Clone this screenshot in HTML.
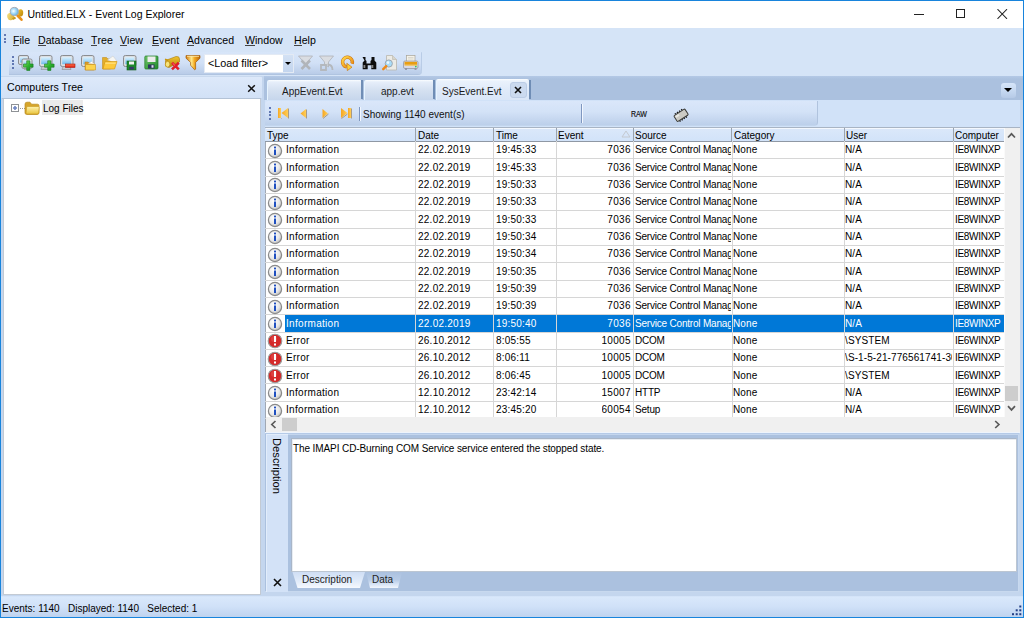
<!DOCTYPE html>
<html><head><meta charset="utf-8">
<style>
*{margin:0;padding:0;box-sizing:border-box}
html,body{width:1024px;height:618px;overflow:hidden}
body{position:relative;background:#1884dc;font-family:"Liberation Sans",sans-serif;font-size:11px;color:#000}
.a{position:absolute}
.t{position:absolute;white-space:pre;line-height:11px;height:11px}
.cell{overflow:hidden;font-size:10px}
svg{display:block}
u{text-decoration:none;position:relative}
u:after{content:"";position:absolute;left:0;right:0;bottom:0px;height:1px;background:#444}
</style></head><body>
<!-- title bar -->
<div class="a" style="left:1px;top:1px;width:1022px;height:27px;background:#fff"></div>
<div class="a" style="left:4px;top:3px;width:24px;height:22px"><svg width="24" height="22" viewBox="4 3 24 22"><defs><radialGradient id="lens" cx="40%" cy="45%" r="60%"><stop offset="0" stop-color="#ffffff"/><stop offset=".35" stop-color="#bfe6fb"/><stop offset="1" stop-color="#5fb3e6"/></radialGradient><linearGradient id="coin1" x1="0" y1="0" x2="1" y2="1"><stop offset="0" stop-color="#f4e08a"/><stop offset="1" stop-color="#d9ac2a"/></linearGradient><linearGradient id="coin2" x1="0" y1="0" x2="1" y2="1"><stop offset="0" stop-color="#f0c030"/><stop offset="1" stop-color="#b8860b"/></linearGradient></defs>
<ellipse cx="20.6" cy="12.8" rx="2.6" ry="3.6" fill="url(#coin2)"/>
<ellipse cx="10.6" cy="16.5" rx="3.4" ry="3.6" fill="url(#coin1)" transform="rotate(-20 10.6 16.5)"/>
<path d="M12 18.5l3-2 1 2-3 1.5z" fill="#c99a1e"/>
<path d="M17.5 15.5l4 4.2" stroke="#e8901a" stroke-width="2.6" stroke-linecap="round"/>
<circle cx="14.3" cy="11.5" r="4.1" fill="url(#lens)" stroke="#a9acb4" stroke-width="1"/></svg></div>
<div class="t" style="left:27.5px;top:9px;font-size:10.5px">Untitled.ELX - Event Log Explorer</div>
<div class="a" style="left:914px;top:14px;width:10px;height:1px;background:#222"></div>
<div class="a" style="left:956px;top:9px;width:9px;height:9px;border:1px solid #222"></div>
<div class="a" style="left:997px;top:9px;width:11px;height:10px"><svg width="11" height="10" viewBox="0 0 11 10"><path d="M0.5 0.2L10 9.8M10 0.2L0.5 9.8" stroke="#222" stroke-width="1.05"/></svg></div>

<!-- menubar -->
<div class="a" style="left:1px;top:28px;width:1022px;height:49px;background:#d5e4f7"></div>
<div class="a" style="left:4px;top:34px;width:2px;height:2px;border-radius:1px;background:#3b559c"></div>
<div class="a" style="left:4px;top:37.5px;width:2px;height:2px;border-radius:1px;background:#3b559c"></div>
<div class="a" style="left:4px;top:41px;width:2px;height:2px;border-radius:1px;background:#3b559c"></div>
<div class="t" style="left:13px;top:35px;font-size:10.6px"><u>F</u>ile</div>
<div class="t" style="left:38px;top:35px;font-size:10.6px"><u>D</u>atabase</div>
<div class="t" style="left:91px;top:35px;font-size:10.6px"><u>T</u>ree</div>
<div class="t" style="left:120px;top:35px;font-size:10.6px"><u>V</u>iew</div>
<div class="t" style="left:152px;top:35px;font-size:10.6px"><u>E</u>vent</div>
<div class="t" style="left:187px;top:35px;font-size:10.6px"><u>A</u>dvanced</div>
<div class="t" style="left:245px;top:35px;font-size:10.6px"><u>W</u>indow</div>
<div class="t" style="left:294px;top:35px;font-size:10.6px"><u>H</u>elp</div>

<!-- main toolbar -->
<div class="a" style="left:9px;top:52px;width:413px;height:22px;border-radius:0 1px 4px 0;background:linear-gradient(#d8e6f9,#d1e0f6 50%,#b9cce8);border-right:1px solid #b9cce6;box-shadow:0 1px 0 #b0c4e0"></div>
<div class="a" style="left:12px;top:56px;width:2px;height:2px;border-radius:1px;background:#3b559c"></div>
<div class="a" style="left:12px;top:59.5px;width:2px;height:2px;border-radius:1px;background:#3b559c"></div>
<div class="a" style="left:12px;top:63px;width:2px;height:2px;border-radius:1px;background:#3b559c"></div>
<div class="a" style="left:12px;top:66.5px;width:2px;height:2px;border-radius:1px;background:#3b559c"></div>
<!-- tb icon 1: two monitors plus -->
<div class="a" style="left:17px;top:54px;width:18px;height:18px"><svg width="18" height="18" viewBox="0 0 18 18"><defs><linearGradient id="scr" x1="0" y1="0" x2="0" y2="1"><stop offset="0" stop-color="#d9f1ff"/><stop offset="1" stop-color="#72bdee"/></linearGradient><linearGradient id="pl" x1="0" y1="0" x2="1" y2="1"><stop offset="0" stop-color="#8be06a"/><stop offset=".5" stop-color="#2fb52f"/><stop offset="1" stop-color="#138a1c"/></linearGradient></defs>
<rect x="1.5" y="1.5" width="10" height="9" rx="1.5" fill="#dcdee1" stroke="#8a8d91"/><rect x="3" y="3" width="7" height="5.5" fill="url(#scr)"/>
<rect x="5" y="5" width="10" height="9.5" rx="1.5" fill="#dcdee1" stroke="#8a8d91"/><rect x="6.5" y="6.5" width="7" height="5.5" fill="url(#scr)"/><rect x="7" y="14.5" width="6" height="1.5" fill="#a9acb0"/>
<path d="M6.5 10h3.2v-3.2h3.2v3.2h3.2v3.2h-3.2v3.2h-3.2v-3.2h-3.2z" fill="url(#pl)" stroke="#1b7a22" stroke-width=".6"/></svg></div>
<!-- tb icon 2: monitor plus -->
<div class="a" style="left:38px;top:54px;width:18px;height:18px"><svg width="18" height="18" viewBox="0 0 18 18">
<rect x="1.5" y="1.5" width="12.5" height="11" rx="1.8" fill="#dcdee1" stroke="#8a8d91"/><rect x="3.2" y="3.2" width="9" height="7" fill="url(#scr)"/><path d="M4 12.5h7l1 3h-9z" fill="#c5c8cc" stroke="#8a8d91" stroke-width=".6"/>
<path d="M6.5 10h3.2v-3.2h3.2v3.2h3.2v3.2h-3.2v3.2h-3.2v-3.2h-3.2z" fill="url(#pl)" stroke="#1b7a22" stroke-width=".6"/></svg></div>
<!-- tb icon 3: monitor minus -->
<div class="a" style="left:59px;top:54px;width:18px;height:18px"><svg width="18" height="18" viewBox="0 0 18 18">
<rect x="1.5" y="1.5" width="12.5" height="11" rx="1.8" fill="#dcdee1" stroke="#8a8d91"/><rect x="3.2" y="3.2" width="9" height="7" fill="url(#scr)"/><path d="M4 12.5h7l1 3h-9z" fill="#c5c8cc" stroke="#8a8d91" stroke-width=".6"/>
<rect x="6.5" y="10" width="9.5" height="3.5" fill="#e8321e" stroke="#a81a10" stroke-width=".6"/><rect x="7" y="10.5" width="8.5" height="1" fill="#ff8a5a" opacity=".7"/></svg></div>
<!-- tb icon 4: monitor folder -->
<div class="a" style="left:80px;top:54px;width:18px;height:18px"><svg width="18" height="18" viewBox="0 0 18 18">
<rect x="1.5" y="1.5" width="12.5" height="11" rx="1.8" fill="#dcdee1" stroke="#8a8d91"/><rect x="3.2" y="3.2" width="9" height="7" fill="url(#scr)"/>
<path d="M5 8h3l1 1h5v7h-9z" fill="#d99a28" stroke="#b87c18" stroke-width=".5"/><path d="M8.5 9.5l3-2 3 2.5z" fill="#fff" stroke="#ccc" stroke-width=".4"/><path d="M5.5 10.5h10v5.5h-10z" fill="#fcd34c" stroke="#c99420" stroke-width=".6"/></svg></div>
<!-- tb icon 5: open folder -->
<div class="a" style="left:101px;top:54px;width:18px;height:18px"><svg width="18" height="18" viewBox="0 0 18 18">
<path d="M1.5 3.5h4l1.5 1.5h2.5v10h-8z" fill="#e2ae2c" stroke="#c38f22" stroke-width=".6"/><path d="M6.5 6l5.5-4 3.5 4.5-2.5 2z" fill="#f6f6f4" stroke="#c9c9c4" stroke-width=".5"/><path d="M4 7.5h12l-2.5 7.5h-11.5z" fill="#fdc93a" stroke="#d39a1a" stroke-width=".7"/><path d="M4.5 8.5h10.5l-.4 1.5h-10.5z" fill="#ffe28a" opacity=".7"/></svg></div>
<!-- tb icon 6: monitor floppy -->
<div class="a" style="left:122px;top:54px;width:18px;height:18px"><svg width="18" height="18" viewBox="0 0 18 18">
<rect x="1.5" y="1.5" width="12.5" height="11" rx="1.8" fill="#dcdee1" stroke="#8a8d91"/><rect x="3.2" y="3.2" width="9" height="7" fill="url(#scr)"/>
<rect x="5" y="7" width="9" height="9" fill="#1e8a2c" stroke="#125c1a" stroke-width=".6"/><rect x="7" y="7.5" width="5" height="3" fill="#f2f2f2"/><rect x="7.2" y="12.8" width="4.6" height="2.8" fill="#363a68"/></svg></div>
<!-- tb icon 7: floppy -->
<div class="a" style="left:143px;top:54px;width:18px;height:18px"><svg width="18" height="18" viewBox="0 0 18 18"><defs><linearGradient id="fl" x1="0" y1="0" x2="1" y2="1"><stop offset="0" stop-color="#6fc46a"/><stop offset="1" stop-color="#1f8a2a"/></linearGradient></defs>
<rect x="1.8" y="2" width="13.2" height="13" rx="1" fill="url(#fl)" stroke="#217a25" stroke-width=".7"/><rect x="4.5" y="2.5" width="8" height="5.5" fill="#ececec"/><rect x="5" y="10.5" width="6.5" height="4" fill="#2d3360"/><rect x="8.5" y="11.2" width="2" height="2.5" fill="#dfe2f0"/></svg></div>
<!-- tb icon 8: log with red X -->
<div class="a" style="left:164px;top:54px;width:18px;height:18px"><svg width="18" height="18" viewBox="0 0 18 18"><defs><linearGradient id="lg1" x1="0" y1="0" x2="0" y2="1"><stop offset="0" stop-color="#f2c62e"/><stop offset="1" stop-color="#b4820c"/></linearGradient></defs>
<path d="M1.5 6.5L12 2.5Q15.5 2 15.5 5L15.5 8L5 13.5L1.5 12z" fill="url(#lg1)" stroke="#a8780c" stroke-width=".6"/><path d="M1 5.2l3.2 1.3" stroke="#c8960e" stroke-width="1.4"/>
<ellipse cx="3.6" cy="10.2" rx="2.3" ry="2.9" fill="#f7e47c" stroke="#b8860b" stroke-width=".7"/>
<path d="M8 8.8l6.8 6.6M14.8 8.8l-6.8 6.6" stroke="#e21d28" stroke-width="2.6"/><path d="M8.6 9.2l2.5 2.4" stroke="#ff8a8a" stroke-width=".8"/></svg></div>
<!-- tb icon 9: funnel -->
<div class="a" style="left:185px;top:54px;width:18px;height:18px"><svg width="18" height="18" viewBox="0 0 18 18"><defs><linearGradient id="fg" x1="0" x2="1"><stop offset="0" stop-color="#d27a0c"/><stop offset=".4" stop-color="#ffe888"/><stop offset=".6" stop-color="#f4aa22"/><stop offset="1" stop-color="#b8640a"/></linearGradient></defs>
<path d="M1 1.6H15V4.2L10.6 8.4V15.2L9.6 15.8L5.6 11.2V8.4L1 4.2z" fill="url(#fg)" stroke="#a45c08" stroke-width=".7"/><path d="M2 2.4H14" stroke="#ffe9a8" stroke-width=".8"/></svg></div>
<!-- combo -->
<div class="a" style="left:204px;top:54px;width:90px;height:19px;background:#fff;border:1px solid #e3eaf4"></div>
<div class="a" style="left:283px;top:55px;width:10px;height:17px;background:linear-gradient(#d3e1f4,#c3d5ee)"></div>
<div class="a" style="left:285px;top:62px;width:0;height:0;border-left:3px solid transparent;border-right:3px solid transparent;border-top:3px solid #000"></div>
<div class="t" style="left:208px;top:58px;font-size:10.8px">&lt;Load filter&gt;</div>
<!-- tb icon 11: disabled filter X -->
<div class="a" style="left:297px;top:54px;width:18px;height:18px"><svg width="18" height="18" viewBox="0 0 18 18">
<path d="M1.5 2h14l-5 6v5l-4-3v-2z" fill="#dadde2" stroke="#aeb3b9" stroke-width=".8"/><path d="M4.5 6.5l8.5 8.5M13 6.5l-8.5 8.5" stroke="#b1b5ba" stroke-width="2.6"/></svg></div>
<!-- tb icon 12: disabled filter sum -->
<div class="a" style="left:318px;top:54px;width:18px;height:18px"><svg width="18" height="18" viewBox="0 0 18 18">
<path d="M1.5 2h14l-5 6v5l-4-3v-2z" fill="#dadde2" stroke="#aeb3b9" stroke-width=".8"/><path d="M3 11h5v5h-5zM9.5 10.5c3 0 5 1 5 5.5" fill="none" stroke="#b4b8bd" stroke-width="1.8"/></svg></div>
<!-- tb icon 13: refresh -->
<div class="a" style="left:339px;top:54px;width:18px;height:18px"><svg width="18" height="18" viewBox="0 0 18 18"><defs><linearGradient id="rf" x1="0" y1="0" x2="1" y2="1"><stop offset="0" stop-color="#ffd84a"/><stop offset="1" stop-color="#e9820e"/></linearGradient></defs>
<path d="M13.1 9.6A4.9 4.9 0 1 0 7.6 12.9" fill="none" stroke="#c36a0c" stroke-width="3.4"/><path d="M13.1 9.6A4.9 4.9 0 1 0 7.6 12.9" fill="none" stroke="url(#rf)" stroke-width="2.4"/><path d="M7.8 9.3L13 13.2L8.3 16.6z" fill="#fbd03a" stroke="#c97612" stroke-width=".7"/></svg></div>
<!-- tb icon 14: binoculars -->
<div class="a" style="left:360px;top:54px;width:18px;height:18px"><svg width="18" height="18" viewBox="0 0 18 18">
<path d="M2.5 3h3v3l1 1v2.5h4v-2.5l1-1v-3h3v3.5l1.8 2v6.8h-5v-4h-3.6v4h-5v-6.8l1.8-2z" fill="#0d0d0d"/><rect x="3.5" y="11" width="1.8" height="3" fill="#fff" opacity=".5"/><rect x="11.5" y="11" width="1.8" height="3" fill="#fff" opacity=".5"/></svg></div>
<!-- tb icon 15: search doc -->
<div class="a" style="left:381px;top:54px;width:18px;height:18px"><svg width="18" height="18" viewBox="0 0 18 18">
<path d="M5.5 1.5h6l4 4v10.5h-10z" fill="#ecebe6" stroke="#b9b6ad" stroke-width=".8"/><path d="M11.5 1.5v4h4" fill="#d8d5cc" stroke="#b9b6ad" stroke-width=".6"/>
<circle cx="7.8" cy="9.5" r="3.6" fill="#a9dcf8" stroke="#9da8b2" stroke-width="1"/><circle cx="7" cy="8.6" r="1.3" fill="#fff" opacity=".8"/><path d="M5.2 12.2l-3 3" stroke="#f08a18" stroke-width="2.4" stroke-linecap="round"/></svg></div>
<!-- tb icon 16: printer -->
<div class="a" style="left:402px;top:54px;width:18px;height:18px"><svg width="18" height="18" viewBox="0 0 18 18">
<rect x="4.5" y="1.5" width="8.5" height="6" fill="#f4f2ea" stroke="#a8a498" stroke-width=".7"/><path d="M6 3.5h5.5M6 5h5.5" stroke="#c9c6bb" stroke-width=".6"/><rect x="1.5" y="7" width="14.5" height="7.5" rx="1.5" fill="#d8d9e6" stroke="#8d8f9c" stroke-width=".7"/><rect x="2.5" y="7.8" width="12.5" height="3" fill="#e99e12"/><rect x="2.5" y="10.8" width="12.5" height="1" fill="#f6c45a"/><rect x="3" y="14.3" width="2" height="1.5" fill="#8d8f9c"/><rect x="12.5" y="14.3" width="2" height="1.5" fill="#8d8f9c"/><circle cx="13.8" cy="12.6" r="0.9" fill="#2ec76a"/></svg></div>


<!-- main background -->
<div class="a" style="left:1px;top:76px;width:1022px;height:520px;background:#c4d6ee"></div>

<!-- left panel -->
<div class="a" style="left:1px;top:76px;width:261px;height:22px;background:linear-gradient(#c9d9ee 0,#c9d9ee 1px,#dde9fa 1px,#d2e1f6);border-radius:0 2px 0 0"></div><div class="a" style="left:2px;top:98px;width:259px;height:1px;background:#b4c3d6"></div>
<div class="t" style="left:7px;top:82px;font-size:10.6px">Computers Tree</div>
<div class="a" style="left:246.5px;top:84px;width:9px;height:9px"><svg width="9" height="9" viewBox="0 0 9 9"><path d="M1.2 1.2L7.8 7.8M7.8 1.2L1.2 7.8" stroke="#111" stroke-width="1.5"/></svg></div>
<div class="a" style="left:3px;top:99px;width:258px;height:496px;background:#fff;border:1px solid #c3cad3;border-top:none"></div>
<div class="a" style="left:11px;top:104px;width:8px;height:8px;border:1px solid #8f9296;background:#fff"></div>
<div class="a" style="left:13px;top:106px;width:4px;height:4px"><svg width="4" height="4" viewBox="0 0 4 4"><path d="M1.2 0h1.6v1.2h1.2v1.6h-1.2v1.2h-1.6v-1.2h-1.2v-1.6h1.2z" fill="#6f86c4"/></svg></div>
<div class="a" style="left:20px;top:108px;width:5px;height:1px;border-top:1px dotted #9a9a9a"></div>
<div class="a" style="left:24px;top:101px;width:16px;height:14px"><svg width="16" height="14" viewBox="0 0 16 14"><defs><linearGradient id="fo1" x1="0" y1="0" x2="0" y2="1"><stop offset="0" stop-color="#fff3b0"/><stop offset="1" stop-color="#e9c43e"/></linearGradient></defs><path d="M1 3.2q0-2 2-2h3l1.5 2h6q1.5 0 1.5 1.5v7q0 1.8-1.8 1.8h-10.4q-1.8 0-1.8-1.8z" fill="#d7a52a" stroke="#b98a1c" stroke-width=".7"/><path d="M2.8 5.5h11.4q1 0 1 1l-.5 5.2q-.2 1.3-1.5 1.3h-9.6q-1.3 0-1.5-1.3z" fill="url(#fo1)" stroke="#c89a22" stroke-width=".6"/></svg></div>
<div class="a" style="left:42px;top:100px;width:41px;height:15px;background:#ebebeb"></div>
<div class="t" style="left:43px;top:103px;font-size:10px">Log Files</div>

<!-- right panel: tab strip -->
<div class="a" style="left:264px;top:76px;width:759px;height:24px;background:linear-gradient(#b4c9e6,#abc1df 3px,#abc1df)"></div>
<!-- tab 1 -->
<div class="a" style="left:267px;top:80px;width:95px;height:20px;background:linear-gradient(#fbfdff 0,#e6eefa 2px,#d5e1f1 50%,#c6d6ec);border-left:1px solid #e6f4ff;border-radius:2px 2px 0 0"></div>
<div class="a" style="left:361px;top:80px;width:2px;height:19px;background:#6f8db5"></div>
<div class="t" style="left:282px;top:86px;font-size:10px;color:#1a1a1a">AppEvent.Evt</div>
<!-- tab 2 -->
<div class="a" style="left:364px;top:80px;width:70px;height:20px;background:linear-gradient(#fbfdff 0,#e6eefa 2px,#d5e1f1 50%,#c6d6ec);border-left:1px solid #e6f4ff;border-radius:2px 2px 0 0"></div>
<div class="a" style="left:433px;top:80px;width:2px;height:19px;background:#6f8db5"></div>
<div class="t" style="left:381px;top:86px;font-size:10px;color:#1a1a1a">app.evt</div>
<!-- tab 3 active -->
<div class="a" style="left:436px;top:79px;width:93px;height:23px;background:linear-gradient(#fdfeff 0,#eaf2fc 2px,#dfeaf9 50%,#d8e5f7);border-left:1px solid #e6f4ff;border-radius:2px 2px 0 0"></div>
<div class="a" style="left:529px;top:80px;width:2px;height:19px;background:#6f8db5"></div>
<div class="t" style="left:442px;top:86px;font-size:10px;color:#1a1a1a">SysEvent.Evt</div>
<div class="a" style="left:510px;top:82px;width:17px;height:16px;border-radius:3px;background:#cbdaef;border:1px solid #bccde6"></div>
<div class="a" style="left:514px;top:86px;width:8px;height:8px"><svg width="8" height="8" viewBox="0 0 8 8"><path d="M1 1L7 7M7 1L1 7" stroke="#111" stroke-width="1.6"/></svg></div>
<!-- dropdown -->
<div class="a" style="left:1000.5px;top:83px;width:15.5px;height:14.5px;border-radius:3px;background:linear-gradient(#d6e5f9,#c3d6ef 60%,#b6cae6)"></div>
<div class="a" style="left:1004px;top:88px;width:0;height:0;border-left:4px solid transparent;border-right:4px solid transparent;border-top:4.5px solid #000"></div>


<!-- inner toolbar -->
<div class="a" style="left:265px;top:100px;width:755px;height:27px;background:#d1e2f8"></div>
<div class="a" style="left:265px;top:100.5px;width:553px;height:24.5px;border-radius:3px 0 3px 0;background:linear-gradient(#dae7fa,#d3e2f7 45%,#bccfea);border-right:1px solid #b0c3de;box-shadow:0 0.5px 0 #b4c7e2"></div>
<div class="a" style="left:269px;top:107px;width:2px;height:2px;border-radius:1px;background:#3b559c"></div>
<div class="a" style="left:269px;top:110.5px;width:2px;height:2px;border-radius:1px;background:#3b559c"></div>
<div class="a" style="left:269px;top:114px;width:2px;height:2px;border-radius:1px;background:#3b559c"></div>
<div class="a" style="left:269px;top:117.5px;width:2px;height:2px;border-radius:1px;background:#3b559c"></div>
<div class="a" style="left:277px;top:107px;width:13px;height:13px"><svg width="13" height="13" viewBox="0 0 13 13"><defs><linearGradient id="nv" x1="0" y1="0" x2="1" y2="0"><stop offset="0" stop-color="#f6a623"/><stop offset="1" stop-color="#ffcf5a"/></linearGradient></defs><rect x="1" y="1" width="3" height="10" fill="url(#nv)"/><path d="M11 1v10l-6.5-5z" fill="url(#nv)"/><path d="M11.5 1.5v10M4.5 11.5v-0.5" stroke="#a89a86" stroke-width="1"/></svg></div>
<div class="a" style="left:299px;top:107px;width:10px;height:13px"><svg width="10" height="13" viewBox="0 0 10 13"><path d="M7 2v9l-5.5-4.5z" fill="url(#nv)"/><path d="M7.5 2.5v9" stroke="#a89a86" stroke-width="1"/></svg></div>
<div class="a" style="left:321px;top:107px;width:10px;height:13px"><svg width="10" height="13" viewBox="0 0 10 13"><path d="M1.5 2v9l5.5-4.5z" fill="url(#nv)"/><path d="M2 11.5l5.5-4.5" stroke="#a89a86" stroke-width="1"/></svg></div>
<div class="a" style="left:340px;top:107px;width:13px;height:13px"><svg width="13" height="13" viewBox="0 0 13 13"><path d="M1 1v10l6.5-5z" fill="url(#nv)"/><rect x="8" y="1" width="3" height="10" fill="url(#nv)"/><path d="M11.5 1.5v10M1.5 11.5l6-4.5" stroke="#a89a86" stroke-width="1"/></svg></div>
<div class="a" style="left:359px;top:107px;width:1px;height:14px;background:#7f97c0"></div>
<div class="a" style="left:360px;top:107px;width:1px;height:14px;background:#f2f7ff"></div>
<div class="t" style="left:363px;top:109px;font-size:10px;color:#111">Showing 1140 event(s)</div>
<div class="a" style="left:581px;top:104px;width:1px;height:19px;background:#7f97c0"></div>
<div class="a" style="left:582px;top:104px;width:1px;height:19px;background:#f2f7ff"></div>
<div class="t" style="left:631px;top:109px;font-size:9px;letter-spacing:-0.2px;color:#111;-webkit-text-stroke:0.2px #111;transform-origin:0 0;transform:scaleX(0.78)">RAW</div>
<div class="a" style="left:672px;top:106px;width:19px;height:18px"><svg width="19" height="18" viewBox="0 0 19 18"><g transform="rotate(-33 9.5 9)"><path d="M5 5.5v-1.5M7.5 5.5v-1.5M10 5.5v-1.5M12.5 5.5v-1.5M5 12.5v1.5M7.5 12.5v1.5M10 12.5v1.5M12.5 12.5v1.5" stroke="#1a1a1a" stroke-width="1.3"/><rect x="2.5" y="5.5" width="13" height="7" rx="1" fill="#cbcac4" stroke="#3a3a36" stroke-width="1"/><rect x="3.5" y="6.5" width="4" height="2" fill="#f2f2ee" opacity=".8"/></g></svg></div>


<!-- grid -->
<div class="a" style="left:265px;top:127px;width:755px;height:305px;background:#fff;border-left:1px solid #a0a8b4"></div>
<div class="a" style="left:265px;top:127px;width:739px;height:15px;background:linear-gradient(#dbe8fa,#d2e3f9);border-top:1px solid #a8b4c4;border-bottom:1px solid #8f98a4"></div>
<div class="a" style="left:266px;top:128px;width:738px;height:1px;background:#f4f8fe"></div>
<div class="t" style="left:267px;top:130px;font-size:10px">Type</div>
<div class="t" style="left:418px;top:130px;font-size:10px">Date</div>
<div class="t" style="left:496px;top:130px;font-size:10px">Time</div>
<div class="t" style="left:558px;top:130px;font-size:10px">Event</div>
<div class="t" style="left:635px;top:130px;font-size:10px">Source</div>
<div class="t" style="left:734px;top:130px;font-size:10px">Category</div>
<div class="t" style="left:846px;top:130px;font-size:10px">User</div>
<div class="t" style="left:955px;top:130px;font-size:10px">Computer</div>
<div class="a" style="left:621px;top:130px;width:10px;height:8px"><svg width="10" height="8" viewBox="0 0 10 8"><path d="M1 7L5 1L9 7z" fill="none" stroke="#c4c9d0" stroke-width="1"/></svg></div>
<div class="a" style="left:415px;top:128px;width:1px;height:13px;background:#9aa3ae"></div>
<div class="a" style="left:493px;top:128px;width:1px;height:13px;background:#9aa3ae"></div>
<div class="a" style="left:556px;top:128px;width:1px;height:13px;background:#9aa3ae"></div>
<div class="a" style="left:633px;top:128px;width:1px;height:13px;background:#9aa3ae"></div>
<div class="a" style="left:731px;top:128px;width:1px;height:13px;background:#9aa3ae"></div>
<div class="a" style="left:844px;top:128px;width:1px;height:13px;background:#9aa3ae"></div>
<div class="a" style="left:953px;top:128px;width:1px;height:13px;background:#9aa3ae"></div>

<div class="a" style="left:265px;top:158.32px;width:739px;height:1px;background:#d6d6d6"></div>
<div class="a" style="left:267px;top:142.80px;width:16px;height:16px"><svg width="16" height="16" viewBox="0 0 16 16"><defs><radialGradient id="gi" cx="40%" cy="35%" r="70%"><stop offset="0" stop-color="#fff"/><stop offset="0.6" stop-color="#e8e8e8"/><stop offset="1" stop-color="#b8b8b8"/></radialGradient></defs><circle cx="8" cy="8" r="6.6" fill="url(#gi)" stroke="#8a8a8a" stroke-width="1.2"/><rect x="7" y="6.5" width="2" height="5.5" fill="#1f4fc0"/><rect x="7" y="3.6" width="2" height="1.8" fill="#1f4fc0"/></svg></div>
<div class="t cell" style="left:286px;top:144.40px;width:128px;color:#000;letter-spacing:0.3px">Information</div>
<div class="t cell" style="left:418px;top:144.40px;width:74px;color:#000;letter-spacing:0.25px">22.02.2019</div>
<div class="t cell" style="left:496px;top:144.40px;width:59px;color:#000;letter-spacing:0.2px">19:45:33</div>
<div class="t cell" style="right:393.20000000000005px;top:144.40px;color:#000;letter-spacing:0.3px">7036</div>
<div class="t cell" style="left:635px;top:144.40px;width:96px;color:#000;letter-spacing:-0.2px">Service Control Manag</div>
<div class="t cell" style="left:733px;top:144.40px;width:110px;color:#000;letter-spacing:0.1px">None</div>
<div class="t cell" style="left:845px;top:144.40px;width:107px;color:#000;letter-spacing:0.1px">N/A</div>
<div class="t cell" style="left:955px;top:144.40px;width:48px;color:#000;letter-spacing:-0.3px">IE8WINXP</div>
<div class="a" style="left:265px;top:175.64px;width:739px;height:1px;background:#d6d6d6"></div>
<div class="a" style="left:267px;top:160.12px;width:16px;height:16px"><svg width="16" height="16" viewBox="0 0 16 16"><defs><radialGradient id="gi" cx="40%" cy="35%" r="70%"><stop offset="0" stop-color="#fff"/><stop offset="0.6" stop-color="#e8e8e8"/><stop offset="1" stop-color="#b8b8b8"/></radialGradient></defs><circle cx="8" cy="8" r="6.6" fill="url(#gi)" stroke="#8a8a8a" stroke-width="1.2"/><rect x="7" y="6.5" width="2" height="5.5" fill="#1f4fc0"/><rect x="7" y="3.6" width="2" height="1.8" fill="#1f4fc0"/></svg></div>
<div class="t cell" style="left:286px;top:161.72px;width:128px;color:#000;letter-spacing:0.3px">Information</div>
<div class="t cell" style="left:418px;top:161.72px;width:74px;color:#000;letter-spacing:0.25px">22.02.2019</div>
<div class="t cell" style="left:496px;top:161.72px;width:59px;color:#000;letter-spacing:0.2px">19:45:33</div>
<div class="t cell" style="right:393.20000000000005px;top:161.72px;color:#000;letter-spacing:0.3px">7036</div>
<div class="t cell" style="left:635px;top:161.72px;width:96px;color:#000;letter-spacing:-0.2px">Service Control Manag</div>
<div class="t cell" style="left:733px;top:161.72px;width:110px;color:#000;letter-spacing:0.1px">None</div>
<div class="t cell" style="left:845px;top:161.72px;width:107px;color:#000;letter-spacing:0.1px">N/A</div>
<div class="t cell" style="left:955px;top:161.72px;width:48px;color:#000;letter-spacing:-0.3px">IE8WINXP</div>
<div class="a" style="left:265px;top:192.96px;width:739px;height:1px;background:#d6d6d6"></div>
<div class="a" style="left:267px;top:177.44px;width:16px;height:16px"><svg width="16" height="16" viewBox="0 0 16 16"><defs><radialGradient id="gi" cx="40%" cy="35%" r="70%"><stop offset="0" stop-color="#fff"/><stop offset="0.6" stop-color="#e8e8e8"/><stop offset="1" stop-color="#b8b8b8"/></radialGradient></defs><circle cx="8" cy="8" r="6.6" fill="url(#gi)" stroke="#8a8a8a" stroke-width="1.2"/><rect x="7" y="6.5" width="2" height="5.5" fill="#1f4fc0"/><rect x="7" y="3.6" width="2" height="1.8" fill="#1f4fc0"/></svg></div>
<div class="t cell" style="left:286px;top:179.04px;width:128px;color:#000;letter-spacing:0.3px">Information</div>
<div class="t cell" style="left:418px;top:179.04px;width:74px;color:#000;letter-spacing:0.25px">22.02.2019</div>
<div class="t cell" style="left:496px;top:179.04px;width:59px;color:#000;letter-spacing:0.2px">19:50:33</div>
<div class="t cell" style="right:393.20000000000005px;top:179.04px;color:#000;letter-spacing:0.3px">7036</div>
<div class="t cell" style="left:635px;top:179.04px;width:96px;color:#000;letter-spacing:-0.2px">Service Control Manag</div>
<div class="t cell" style="left:733px;top:179.04px;width:110px;color:#000;letter-spacing:0.1px">None</div>
<div class="t cell" style="left:845px;top:179.04px;width:107px;color:#000;letter-spacing:0.1px">N/A</div>
<div class="t cell" style="left:955px;top:179.04px;width:48px;color:#000;letter-spacing:-0.3px">IE8WINXP</div>
<div class="a" style="left:265px;top:210.28px;width:739px;height:1px;background:#d6d6d6"></div>
<div class="a" style="left:267px;top:194.76px;width:16px;height:16px"><svg width="16" height="16" viewBox="0 0 16 16"><defs><radialGradient id="gi" cx="40%" cy="35%" r="70%"><stop offset="0" stop-color="#fff"/><stop offset="0.6" stop-color="#e8e8e8"/><stop offset="1" stop-color="#b8b8b8"/></radialGradient></defs><circle cx="8" cy="8" r="6.6" fill="url(#gi)" stroke="#8a8a8a" stroke-width="1.2"/><rect x="7" y="6.5" width="2" height="5.5" fill="#1f4fc0"/><rect x="7" y="3.6" width="2" height="1.8" fill="#1f4fc0"/></svg></div>
<div class="t cell" style="left:286px;top:196.36px;width:128px;color:#000;letter-spacing:0.3px">Information</div>
<div class="t cell" style="left:418px;top:196.36px;width:74px;color:#000;letter-spacing:0.25px">22.02.2019</div>
<div class="t cell" style="left:496px;top:196.36px;width:59px;color:#000;letter-spacing:0.2px">19:50:33</div>
<div class="t cell" style="right:393.20000000000005px;top:196.36px;color:#000;letter-spacing:0.3px">7036</div>
<div class="t cell" style="left:635px;top:196.36px;width:96px;color:#000;letter-spacing:-0.2px">Service Control Manag</div>
<div class="t cell" style="left:733px;top:196.36px;width:110px;color:#000;letter-spacing:0.1px">None</div>
<div class="t cell" style="left:845px;top:196.36px;width:107px;color:#000;letter-spacing:0.1px">N/A</div>
<div class="t cell" style="left:955px;top:196.36px;width:48px;color:#000;letter-spacing:-0.3px">IE8WINXP</div>
<div class="a" style="left:265px;top:227.60px;width:739px;height:1px;background:#d6d6d6"></div>
<div class="a" style="left:267px;top:212.08px;width:16px;height:16px"><svg width="16" height="16" viewBox="0 0 16 16"><defs><radialGradient id="gi" cx="40%" cy="35%" r="70%"><stop offset="0" stop-color="#fff"/><stop offset="0.6" stop-color="#e8e8e8"/><stop offset="1" stop-color="#b8b8b8"/></radialGradient></defs><circle cx="8" cy="8" r="6.6" fill="url(#gi)" stroke="#8a8a8a" stroke-width="1.2"/><rect x="7" y="6.5" width="2" height="5.5" fill="#1f4fc0"/><rect x="7" y="3.6" width="2" height="1.8" fill="#1f4fc0"/></svg></div>
<div class="t cell" style="left:286px;top:213.68px;width:128px;color:#000;letter-spacing:0.3px">Information</div>
<div class="t cell" style="left:418px;top:213.68px;width:74px;color:#000;letter-spacing:0.25px">22.02.2019</div>
<div class="t cell" style="left:496px;top:213.68px;width:59px;color:#000;letter-spacing:0.2px">19:50:33</div>
<div class="t cell" style="right:393.20000000000005px;top:213.68px;color:#000;letter-spacing:0.3px">7036</div>
<div class="t cell" style="left:635px;top:213.68px;width:96px;color:#000;letter-spacing:-0.2px">Service Control Manag</div>
<div class="t cell" style="left:733px;top:213.68px;width:110px;color:#000;letter-spacing:0.1px">None</div>
<div class="t cell" style="left:845px;top:213.68px;width:107px;color:#000;letter-spacing:0.1px">N/A</div>
<div class="t cell" style="left:955px;top:213.68px;width:48px;color:#000;letter-spacing:-0.3px">IE8WINXP</div>
<div class="a" style="left:265px;top:244.92px;width:739px;height:1px;background:#d6d6d6"></div>
<div class="a" style="left:267px;top:229.40px;width:16px;height:16px"><svg width="16" height="16" viewBox="0 0 16 16"><defs><radialGradient id="gi" cx="40%" cy="35%" r="70%"><stop offset="0" stop-color="#fff"/><stop offset="0.6" stop-color="#e8e8e8"/><stop offset="1" stop-color="#b8b8b8"/></radialGradient></defs><circle cx="8" cy="8" r="6.6" fill="url(#gi)" stroke="#8a8a8a" stroke-width="1.2"/><rect x="7" y="6.5" width="2" height="5.5" fill="#1f4fc0"/><rect x="7" y="3.6" width="2" height="1.8" fill="#1f4fc0"/></svg></div>
<div class="t cell" style="left:286px;top:231.00px;width:128px;color:#000;letter-spacing:0.3px">Information</div>
<div class="t cell" style="left:418px;top:231.00px;width:74px;color:#000;letter-spacing:0.25px">22.02.2019</div>
<div class="t cell" style="left:496px;top:231.00px;width:59px;color:#000;letter-spacing:0.2px">19:50:34</div>
<div class="t cell" style="right:393.20000000000005px;top:231.00px;color:#000;letter-spacing:0.3px">7036</div>
<div class="t cell" style="left:635px;top:231.00px;width:96px;color:#000;letter-spacing:-0.2px">Service Control Manag</div>
<div class="t cell" style="left:733px;top:231.00px;width:110px;color:#000;letter-spacing:0.1px">None</div>
<div class="t cell" style="left:845px;top:231.00px;width:107px;color:#000;letter-spacing:0.1px">N/A</div>
<div class="t cell" style="left:955px;top:231.00px;width:48px;color:#000;letter-spacing:-0.3px">IE8WINXP</div>
<div class="a" style="left:265px;top:262.24px;width:739px;height:1px;background:#d6d6d6"></div>
<div class="a" style="left:267px;top:246.72px;width:16px;height:16px"><svg width="16" height="16" viewBox="0 0 16 16"><defs><radialGradient id="gi" cx="40%" cy="35%" r="70%"><stop offset="0" stop-color="#fff"/><stop offset="0.6" stop-color="#e8e8e8"/><stop offset="1" stop-color="#b8b8b8"/></radialGradient></defs><circle cx="8" cy="8" r="6.6" fill="url(#gi)" stroke="#8a8a8a" stroke-width="1.2"/><rect x="7" y="6.5" width="2" height="5.5" fill="#1f4fc0"/><rect x="7" y="3.6" width="2" height="1.8" fill="#1f4fc0"/></svg></div>
<div class="t cell" style="left:286px;top:248.32px;width:128px;color:#000;letter-spacing:0.3px">Information</div>
<div class="t cell" style="left:418px;top:248.32px;width:74px;color:#000;letter-spacing:0.25px">22.02.2019</div>
<div class="t cell" style="left:496px;top:248.32px;width:59px;color:#000;letter-spacing:0.2px">19:50:34</div>
<div class="t cell" style="right:393.20000000000005px;top:248.32px;color:#000;letter-spacing:0.3px">7036</div>
<div class="t cell" style="left:635px;top:248.32px;width:96px;color:#000;letter-spacing:-0.2px">Service Control Manag</div>
<div class="t cell" style="left:733px;top:248.32px;width:110px;color:#000;letter-spacing:0.1px">None</div>
<div class="t cell" style="left:845px;top:248.32px;width:107px;color:#000;letter-spacing:0.1px">N/A</div>
<div class="t cell" style="left:955px;top:248.32px;width:48px;color:#000;letter-spacing:-0.3px">IE8WINXP</div>
<div class="a" style="left:265px;top:279.56px;width:739px;height:1px;background:#d6d6d6"></div>
<div class="a" style="left:267px;top:264.04px;width:16px;height:16px"><svg width="16" height="16" viewBox="0 0 16 16"><defs><radialGradient id="gi" cx="40%" cy="35%" r="70%"><stop offset="0" stop-color="#fff"/><stop offset="0.6" stop-color="#e8e8e8"/><stop offset="1" stop-color="#b8b8b8"/></radialGradient></defs><circle cx="8" cy="8" r="6.6" fill="url(#gi)" stroke="#8a8a8a" stroke-width="1.2"/><rect x="7" y="6.5" width="2" height="5.5" fill="#1f4fc0"/><rect x="7" y="3.6" width="2" height="1.8" fill="#1f4fc0"/></svg></div>
<div class="t cell" style="left:286px;top:265.64px;width:128px;color:#000;letter-spacing:0.3px">Information</div>
<div class="t cell" style="left:418px;top:265.64px;width:74px;color:#000;letter-spacing:0.25px">22.02.2019</div>
<div class="t cell" style="left:496px;top:265.64px;width:59px;color:#000;letter-spacing:0.2px">19:50:35</div>
<div class="t cell" style="right:393.20000000000005px;top:265.64px;color:#000;letter-spacing:0.3px">7036</div>
<div class="t cell" style="left:635px;top:265.64px;width:96px;color:#000;letter-spacing:-0.2px">Service Control Manag</div>
<div class="t cell" style="left:733px;top:265.64px;width:110px;color:#000;letter-spacing:0.1px">None</div>
<div class="t cell" style="left:845px;top:265.64px;width:107px;color:#000;letter-spacing:0.1px">N/A</div>
<div class="t cell" style="left:955px;top:265.64px;width:48px;color:#000;letter-spacing:-0.3px">IE8WINXP</div>
<div class="a" style="left:265px;top:296.88px;width:739px;height:1px;background:#d6d6d6"></div>
<div class="a" style="left:267px;top:281.36px;width:16px;height:16px"><svg width="16" height="16" viewBox="0 0 16 16"><defs><radialGradient id="gi" cx="40%" cy="35%" r="70%"><stop offset="0" stop-color="#fff"/><stop offset="0.6" stop-color="#e8e8e8"/><stop offset="1" stop-color="#b8b8b8"/></radialGradient></defs><circle cx="8" cy="8" r="6.6" fill="url(#gi)" stroke="#8a8a8a" stroke-width="1.2"/><rect x="7" y="6.5" width="2" height="5.5" fill="#1f4fc0"/><rect x="7" y="3.6" width="2" height="1.8" fill="#1f4fc0"/></svg></div>
<div class="t cell" style="left:286px;top:282.96px;width:128px;color:#000;letter-spacing:0.3px">Information</div>
<div class="t cell" style="left:418px;top:282.96px;width:74px;color:#000;letter-spacing:0.25px">22.02.2019</div>
<div class="t cell" style="left:496px;top:282.96px;width:59px;color:#000;letter-spacing:0.2px">19:50:39</div>
<div class="t cell" style="right:393.20000000000005px;top:282.96px;color:#000;letter-spacing:0.3px">7036</div>
<div class="t cell" style="left:635px;top:282.96px;width:96px;color:#000;letter-spacing:-0.2px">Service Control Manag</div>
<div class="t cell" style="left:733px;top:282.96px;width:110px;color:#000;letter-spacing:0.1px">None</div>
<div class="t cell" style="left:845px;top:282.96px;width:107px;color:#000;letter-spacing:0.1px">N/A</div>
<div class="t cell" style="left:955px;top:282.96px;width:48px;color:#000;letter-spacing:-0.3px">IE8WINXP</div>
<div class="a" style="left:265px;top:314.20px;width:739px;height:1px;background:#d6d6d6"></div>
<div class="a" style="left:267px;top:298.68px;width:16px;height:16px"><svg width="16" height="16" viewBox="0 0 16 16"><defs><radialGradient id="gi" cx="40%" cy="35%" r="70%"><stop offset="0" stop-color="#fff"/><stop offset="0.6" stop-color="#e8e8e8"/><stop offset="1" stop-color="#b8b8b8"/></radialGradient></defs><circle cx="8" cy="8" r="6.6" fill="url(#gi)" stroke="#8a8a8a" stroke-width="1.2"/><rect x="7" y="6.5" width="2" height="5.5" fill="#1f4fc0"/><rect x="7" y="3.6" width="2" height="1.8" fill="#1f4fc0"/></svg></div>
<div class="t cell" style="left:286px;top:300.28px;width:128px;color:#000;letter-spacing:0.3px">Information</div>
<div class="t cell" style="left:418px;top:300.28px;width:74px;color:#000;letter-spacing:0.25px">22.02.2019</div>
<div class="t cell" style="left:496px;top:300.28px;width:59px;color:#000;letter-spacing:0.2px">19:50:39</div>
<div class="t cell" style="right:393.20000000000005px;top:300.28px;color:#000;letter-spacing:0.3px">7036</div>
<div class="t cell" style="left:635px;top:300.28px;width:96px;color:#000;letter-spacing:-0.2px">Service Control Manag</div>
<div class="t cell" style="left:733px;top:300.28px;width:110px;color:#000;letter-spacing:0.1px">None</div>
<div class="t cell" style="left:845px;top:300.28px;width:107px;color:#000;letter-spacing:0.1px">N/A</div>
<div class="t cell" style="left:955px;top:300.28px;width:48px;color:#000;letter-spacing:-0.3px">IE8WINXP</div>
<div class="a" style="left:265px;top:331.52px;width:739px;height:1px;background:#d6d6d6"></div>
<div class="a" style="left:285px;top:315.00px;width:719px;height:17.12px;background:#0078d7"></div>
<div class="a" style="left:267px;top:316.00px;width:16px;height:16px"><svg width="16" height="16" viewBox="0 0 16 16"><defs><radialGradient id="gi" cx="40%" cy="35%" r="70%"><stop offset="0" stop-color="#fff"/><stop offset="0.6" stop-color="#e8e8e8"/><stop offset="1" stop-color="#b8b8b8"/></radialGradient></defs><circle cx="8" cy="8" r="6.6" fill="url(#gi)" stroke="#8a8a8a" stroke-width="1.2"/><rect x="7" y="6.5" width="2" height="5.5" fill="#1f4fc0"/><rect x="7" y="3.6" width="2" height="1.8" fill="#1f4fc0"/></svg></div>
<div class="t cell" style="left:286px;top:317.60px;width:128px;color:#fff;letter-spacing:0.3px">Information</div>
<div class="t cell" style="left:418px;top:317.60px;width:74px;color:#fff;letter-spacing:0.25px">22.02.2019</div>
<div class="t cell" style="left:496px;top:317.60px;width:59px;color:#fff;letter-spacing:0.2px">19:50:40</div>
<div class="t cell" style="right:393.20000000000005px;top:317.60px;color:#fff;letter-spacing:0.3px">7036</div>
<div class="t cell" style="left:635px;top:317.60px;width:96px;color:#fff;letter-spacing:-0.2px">Service Control Manag</div>
<div class="t cell" style="left:733px;top:317.60px;width:110px;color:#fff;letter-spacing:0.1px">None</div>
<div class="t cell" style="left:845px;top:317.60px;width:107px;color:#fff;letter-spacing:0.1px">N/A</div>
<div class="t cell" style="left:955px;top:317.60px;width:48px;color:#fff;letter-spacing:-0.3px">IE8WINXP</div>
<div class="a" style="left:265px;top:348.84px;width:739px;height:1px;background:#d6d6d6"></div>
<div class="a" style="left:267px;top:333.32px;width:16px;height:16px"><svg width="16" height="16" viewBox="0 0 16 16"><circle cx="8" cy="8" r="6.8" fill="#d42a2a" stroke="#9a9a9a" stroke-width="1.1"/><circle cx="7" cy="6" r="3" fill="#e85a5a" opacity=".5"/><rect x="7" y="3" width="2" height="6" fill="#fff"/><rect x="7" y="10.5" width="2" height="2" fill="#fff"/></svg></div>
<div class="t cell" style="left:286px;top:334.92px;width:128px;color:#000;letter-spacing:0.3px">Error</div>
<div class="t cell" style="left:418px;top:334.92px;width:74px;color:#000;letter-spacing:0.25px">26.10.2012</div>
<div class="t cell" style="left:496px;top:334.92px;width:59px;color:#000;letter-spacing:0.2px">8:05:55</div>
<div class="t cell" style="right:393.20000000000005px;top:334.92px;color:#000;letter-spacing:0.3px">10005</div>
<div class="t cell" style="left:635px;top:334.92px;width:96px;color:#000;letter-spacing:-0.2px">DCOM</div>
<div class="t cell" style="left:733px;top:334.92px;width:110px;color:#000;letter-spacing:0.1px">None</div>
<div class="t cell" style="left:845px;top:334.92px;width:107px;color:#000;letter-spacing:0.1px">\SYSTEM</div>
<div class="t cell" style="left:955px;top:334.92px;width:48px;color:#000;letter-spacing:-0.3px">IE6WINXP</div>
<div class="a" style="left:265px;top:366.16px;width:739px;height:1px;background:#d6d6d6"></div>
<div class="a" style="left:267px;top:350.64px;width:16px;height:16px"><svg width="16" height="16" viewBox="0 0 16 16"><circle cx="8" cy="8" r="6.8" fill="#d42a2a" stroke="#9a9a9a" stroke-width="1.1"/><circle cx="7" cy="6" r="3" fill="#e85a5a" opacity=".5"/><rect x="7" y="3" width="2" height="6" fill="#fff"/><rect x="7" y="10.5" width="2" height="2" fill="#fff"/></svg></div>
<div class="t cell" style="left:286px;top:352.24px;width:128px;color:#000;letter-spacing:0.3px">Error</div>
<div class="t cell" style="left:418px;top:352.24px;width:74px;color:#000;letter-spacing:0.25px">26.10.2012</div>
<div class="t cell" style="left:496px;top:352.24px;width:59px;color:#000;letter-spacing:0.2px">8:06:11</div>
<div class="t cell" style="right:393.20000000000005px;top:352.24px;color:#000;letter-spacing:0.3px">10005</div>
<div class="t cell" style="left:635px;top:352.24px;width:96px;color:#000;letter-spacing:-0.2px">DCOM</div>
<div class="t cell" style="left:733px;top:352.24px;width:110px;color:#000;letter-spacing:0.1px">None</div>
<div class="t cell" style="left:845px;top:352.24px;width:107px;color:#000;letter-spacing:0.1px">\S-1-5-21-776561741-30</div>
<div class="t cell" style="left:955px;top:352.24px;width:48px;color:#000;letter-spacing:-0.3px">IE6WINXP</div>
<div class="a" style="left:265px;top:383.48px;width:739px;height:1px;background:#d6d6d6"></div>
<div class="a" style="left:267px;top:367.96px;width:16px;height:16px"><svg width="16" height="16" viewBox="0 0 16 16"><circle cx="8" cy="8" r="6.8" fill="#d42a2a" stroke="#9a9a9a" stroke-width="1.1"/><circle cx="7" cy="6" r="3" fill="#e85a5a" opacity=".5"/><rect x="7" y="3" width="2" height="6" fill="#fff"/><rect x="7" y="10.5" width="2" height="2" fill="#fff"/></svg></div>
<div class="t cell" style="left:286px;top:369.56px;width:128px;color:#000;letter-spacing:0.3px">Error</div>
<div class="t cell" style="left:418px;top:369.56px;width:74px;color:#000;letter-spacing:0.25px">26.10.2012</div>
<div class="t cell" style="left:496px;top:369.56px;width:59px;color:#000;letter-spacing:0.2px">8:06:45</div>
<div class="t cell" style="right:393.20000000000005px;top:369.56px;color:#000;letter-spacing:0.3px">10005</div>
<div class="t cell" style="left:635px;top:369.56px;width:96px;color:#000;letter-spacing:-0.2px">DCOM</div>
<div class="t cell" style="left:733px;top:369.56px;width:110px;color:#000;letter-spacing:0.1px">None</div>
<div class="t cell" style="left:845px;top:369.56px;width:107px;color:#000;letter-spacing:0.1px">\SYSTEM</div>
<div class="t cell" style="left:955px;top:369.56px;width:48px;color:#000;letter-spacing:-0.3px">IE6WINXP</div>
<div class="a" style="left:265px;top:400.80px;width:739px;height:1px;background:#d6d6d6"></div>
<div class="a" style="left:267px;top:385.28px;width:16px;height:16px"><svg width="16" height="16" viewBox="0 0 16 16"><defs><radialGradient id="gi" cx="40%" cy="35%" r="70%"><stop offset="0" stop-color="#fff"/><stop offset="0.6" stop-color="#e8e8e8"/><stop offset="1" stop-color="#b8b8b8"/></radialGradient></defs><circle cx="8" cy="8" r="6.6" fill="url(#gi)" stroke="#8a8a8a" stroke-width="1.2"/><rect x="7" y="6.5" width="2" height="5.5" fill="#1f4fc0"/><rect x="7" y="3.6" width="2" height="1.8" fill="#1f4fc0"/></svg></div>
<div class="t cell" style="left:286px;top:386.88px;width:128px;color:#000;letter-spacing:0.3px">Information</div>
<div class="t cell" style="left:418px;top:386.88px;width:74px;color:#000;letter-spacing:0.25px">12.10.2012</div>
<div class="t cell" style="left:496px;top:386.88px;width:59px;color:#000;letter-spacing:0.2px">23:42:14</div>
<div class="t cell" style="right:393.20000000000005px;top:386.88px;color:#000;letter-spacing:0.3px">15007</div>
<div class="t cell" style="left:635px;top:386.88px;width:96px;color:#000;letter-spacing:-0.2px">HTTP</div>
<div class="t cell" style="left:733px;top:386.88px;width:110px;color:#000;letter-spacing:0.1px">None</div>
<div class="t cell" style="left:845px;top:386.88px;width:107px;color:#000;letter-spacing:0.1px">N/A</div>
<div class="t cell" style="left:955px;top:386.88px;width:48px;color:#000;letter-spacing:-0.3px">IE6WINXP</div>
<div class="a" style="left:265px;top:418.12px;width:739px;height:1px;background:#d6d6d6"></div>
<div class="a" style="left:267px;top:402.60px;width:16px;height:16px"><svg width="16" height="16" viewBox="0 0 16 16"><defs><radialGradient id="gi" cx="40%" cy="35%" r="70%"><stop offset="0" stop-color="#fff"/><stop offset="0.6" stop-color="#e8e8e8"/><stop offset="1" stop-color="#b8b8b8"/></radialGradient></defs><circle cx="8" cy="8" r="6.6" fill="url(#gi)" stroke="#8a8a8a" stroke-width="1.2"/><rect x="7" y="6.5" width="2" height="5.5" fill="#1f4fc0"/><rect x="7" y="3.6" width="2" height="1.8" fill="#1f4fc0"/></svg></div>
<div class="t cell" style="left:286px;top:404.20px;width:128px;color:#000;letter-spacing:0.3px">Information</div>
<div class="t cell" style="left:418px;top:404.20px;width:74px;color:#000;letter-spacing:0.25px">12.10.2012</div>
<div class="t cell" style="left:496px;top:404.20px;width:59px;color:#000;letter-spacing:0.2px">23:45:20</div>
<div class="t cell" style="right:393.20000000000005px;top:404.20px;color:#000;letter-spacing:0.3px">60054</div>
<div class="t cell" style="left:635px;top:404.20px;width:96px;color:#000;letter-spacing:-0.2px">Setup</div>
<div class="t cell" style="left:733px;top:404.20px;width:110px;color:#000;letter-spacing:0.1px">None</div>
<div class="t cell" style="left:845px;top:404.20px;width:107px;color:#000;letter-spacing:0.1px">N/A</div>
<div class="t cell" style="left:955px;top:404.20px;width:48px;color:#000;letter-spacing:-0.3px">IE6WINXP</div>
<div class="a" style="left:415px;top:141px;width:1px;height:276px;background:#d6d6d6"></div>
<div class="a" style="left:493px;top:141px;width:1px;height:276px;background:#d6d6d6"></div>
<div class="a" style="left:556px;top:141px;width:1px;height:276px;background:#d6d6d6"></div>
<div class="a" style="left:633px;top:141px;width:1px;height:276px;background:#d6d6d6"></div>
<div class="a" style="left:732px;top:141px;width:1px;height:276px;background:#d6d6d6"></div>
<div class="a" style="left:844px;top:141px;width:1px;height:276px;background:#d6d6d6"></div>
<div class="a" style="left:953px;top:141px;width:1px;height:276px;background:#d6d6d6"></div>
<!-- vertical scrollbar -->
<div class="a" style="left:1004px;top:127px;width:16px;height:1px;background:#a8b4c4"></div><div class="a" style="left:1004px;top:128px;width:16px;height:289px;background:#f0f0f0;border-left:1px solid #fafafa"></div>
<div class="a" style="left:1005px;top:386px;width:13px;height:15px;background:#cdcdcd"></div>
<!-- horizontal scrollbar -->
<div class="a" style="left:266px;top:417px;width:754px;height:15px;background:#f0f0f0"></div>
<div class="a" style="left:282px;top:418px;width:15px;height:13px;background:#cdcdcd"></div>
<div class="a" style="left:1007.3px;top:132px;width:9px;height:7px"><svg width="9" height="7" viewBox="0 0 9 7"><path d="M1 5.5L4.5 1.8L8 5.5" fill="none" stroke="#5a5a5a" stroke-width="1.7"/></svg></div>
<div class="a" style="left:1007.3px;top:405px;width:9px;height:7px"><svg width="9" height="7" viewBox="0 0 9 7"><path d="M1 1.2L4.5 4.9L8 1.2" fill="none" stroke="#5a5a5a" stroke-width="1.7"/></svg></div>
<div class="a" style="left:270px;top:420px;width:7px;height:9px"><svg width="7" height="9" viewBox="0 0 7 9"><path d="M5.5 1L1.8 4.5L5.5 8" fill="none" stroke="#5a5a5a" stroke-width="1.7"/></svg></div>
<div class="a" style="left:993.5px;top:420px;width:7px;height:9px"><svg width="7" height="9" viewBox="0 0 7 9"><path d="M1.2 1L4.9 4.5L1.2 8" fill="none" stroke="#5a5a5a" stroke-width="1.7"/></svg></div>


<!-- description panel -->
<div class="a" style="left:265px;top:432px;width:755px;height:1px;background:#eef4fc"></div>
<div class="a" style="left:265px;top:433px;width:754px;height:159px;background:#abc1df;border-right:1px solid #c8d9ef;border-bottom:1px solid #c8d9ef"></div>
<div class="a" style="left:265px;top:433px;width:754px;height:1px;background:#b5cae7"></div>
<div class="a" style="left:288px;top:434px;width:731px;height:1px;background:#c4d6ee"></div>
<div class="a" style="left:266px;top:434px;width:22px;height:158px;background:#d3e2f7;border-top:1px solid #e2edfb;border-left:1px solid #e2edfb"></div>
<div class="t" style="left:270px;top:437.5px;width:60px;font-size:11.2px;transform-origin:0 0;transform:translate(12px,0) rotate(90deg)">Description</div>
<div class="a" style="left:272.5px;top:578px;width:9px;height:9px"><svg width="9" height="9" viewBox="0 0 9 9"><path d="M1 1L8 8M8 1L1 8" stroke="#111" stroke-width="1.6"/></svg></div>
<div class="a" style="left:290.5px;top:437.5px;width:726px;height:134px;background:#fff;border:1px solid #bcc6d2;border-top-color:#a9b6c8;border-left-color:#a9b6c8;box-shadow:inset 1px 1px 0 #e8edf3"></div>
<div class="t" style="left:293px;top:443px;font-size:10px;letter-spacing:-0.1px">The IMAPI CD-Burning COM Service service entered the stopped state.</div>
<div class="a" style="left:292px;top:572px;width:76px;height:17px"><svg width="76" height="17" viewBox="0 0 76 17"><defs><linearGradient id="bt1" x1="0" y1="0" x2="0" y2="1"><stop offset="0" stop-color="#cfdef4"/><stop offset=".6" stop-color="#e2ecfa"/><stop offset="1" stop-color="#f6f9fe"/></linearGradient></defs><path d="M0.5 0H73L68 16H5.5z" fill="url(#bt1)"/></svg></div>
<div class="t" style="left:302px;top:573.5px;font-size:10px;color:#222">Description</div>
<div class="a" style="left:366px;top:572px;width:37px;height:17px"><svg width="37" height="17" viewBox="0 0 37 17"><defs><linearGradient id="bt2" x1="0" y1="0" x2="0" y2="1"><stop offset="0" stop-color="#abc1df"/><stop offset=".5" stop-color="#b8cce7"/><stop offset=".8" stop-color="#dbe7f8"/><stop offset="1" stop-color="#f2f6fd"/></linearGradient></defs><path d="M0 0H36L32 16H4z" fill="url(#bt2)"/></svg></div>
<div class="t" style="left:372px;top:573.5px;font-size:10px;color:#222">Data</div>

<!-- status bar -->
<div class="a" style="left:1px;top:596px;width:1022px;height:21px;background:linear-gradient(#cfdff6 0,#d9e8fb 1px,#d0e1f8 50%,#bfd3ef)"></div>
<div class="t" style="left:2px;top:603px;font-size:10px">Events: 1140   Displayed: 1140   Selected: 1</div>
<div class="a" style="left:1011px;top:605px;width:11px;height:11px"><svg width="11" height="11" viewBox="0 0 11 11"><g fill="#233f86"><rect x="8.3" y="0.5" width="2" height="2"/><rect x="4.7" y="4.3" width="2" height="2"/><rect x="8.3" y="4.3" width="2" height="2"/><rect x="1" y="8.2" width="2" height="2"/><rect x="4.7" y="8.2" width="2" height="2"/><rect x="8.3" y="8.2" width="2" height="2"/></g></svg></div>
</body></html>
